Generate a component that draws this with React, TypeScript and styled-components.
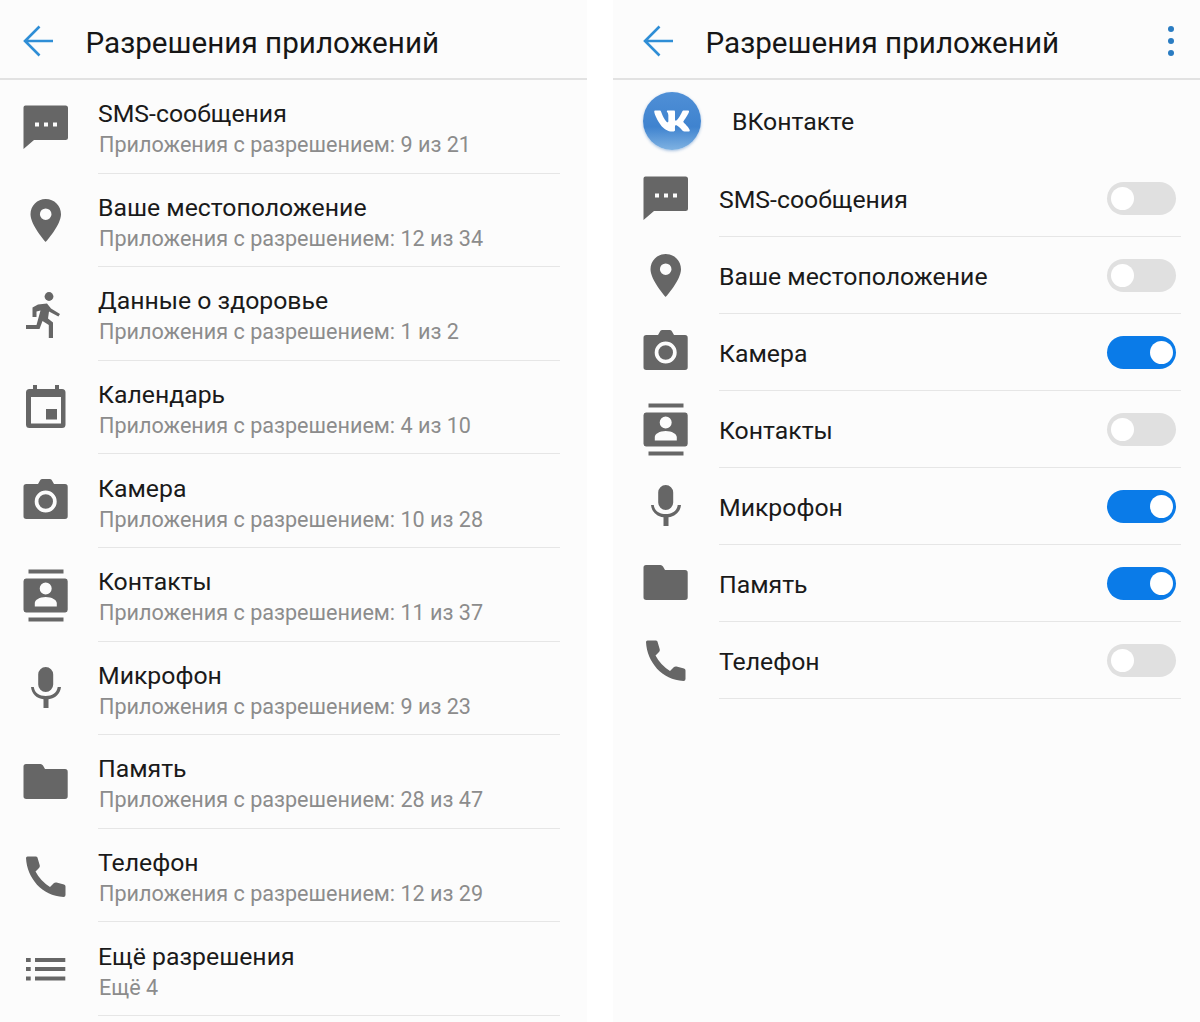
import React from 'react';
import styled, {createGlobalStyle} from 'styled-components';
import {FaVk} from 'react-icons/fa';

const Global = createGlobalStyle`
  html, body {
    margin: 0;
    background: #fff;
  }
  body {
    font-family: Roboto, "Liberation Sans", sans-serif;
  }
`;

const Page = styled.div`
  display: flex;
  justify-content: space-between;
  width: 1200px;
  height: 1022px;
  overflow: hidden;
`;
const Panel = styled.section`
  width: 587px;
  height: 1022px;
  background: #fcfcfc;
`;
const Header = styled.header<{$inset: number}>`
  display: flex;
  align-items: center;
  gap: 29.5px;
  height: 74px;
  padding-top: 4px;
  padding-left: ${p => p.$inset}px;
  padding-right: 25px;
  border-bottom: 2.5px solid #e2e2e2;
`;
const Title = styled.h1`
  flex: 1;
  margin: 0;
  padding-top: 2px;
  font-size: 29.65px;
  font-weight: 400;
  color: #161616;
`;
const Row = styled.div<{$height: number; $inset: number; $gap: number; $end: number}>`
  display: flex;
  align-items: center;
  gap: ${p => p.$gap}px;
  height: ${p => p.$height}px;
  padding-left: ${p => p.$inset}px;
  padding-right: ${p => p.$end}px;
`;
const Body = styled.div`
  flex: 1;
  align-self: stretch;
  display: flex;
  align-items: center;
  justify-content: space-between;
  box-sizing: border-box;
  padding-top: 4px;
  padding-right: 5px;
  border-bottom: 1px solid #e6e6e6;
`;
const Stack = styled.div`
  display: flex;
  flex-direction: column;
  gap: 2px;
  padding-top: 2px;
`;
const Name = styled.div`
  font-size: 24.8px;
  line-height: 30px;
  color: #1a1a1a;
`;
const Sub = styled.div`
  margin-left: 1px;
  font-size: 21.6px;
  line-height: 28px;
  color: #8c8c8c;
`;
const AppRow = styled.div`
  display: flex;
  align-items: center;
  gap: 31px;
  height: 79.5px;
  padding: 4px 0 0 30px;
  box-sizing: border-box;
`;
const Avatar = styled.div`
  display: flex;
  align-items: center;
  justify-content: center;
  width: 58px;
  height: 58px;
  margin-top: -2px;
  border-radius: 50%;
  color: #fff;
  background: linear-gradient(180deg, #4f8fd6 0%, #3f83cf 60%, #7fb2e2 100%);
  box-shadow: 0 1px 3px rgba(60, 120, 190, 0.45);
`;
const Toggle = styled.div<{$on: boolean}>`
  display: flex;
  align-items: center;
  justify-content: ${p => (p.$on ? 'flex-end' : 'flex-start')};
  width: 69px;
  height: 33px;
  margin-top: -2px;
  padding: 0 3px 0 4px;
  box-sizing: border-box;
  border-radius: 17px;
  background: ${p => (p.$on ? '#0a7be8' : '#e0e0e0')};
`;
const Knob = styled.span`
  width: 23px;
  height: 23px;
  border-radius: 50%;
  background: #fff;
`;
const Glyph = styled.svg`
  flex: none;
  width: 48px;
  height: 48px;
  overflow: visible;
  fill: #666;
`;
const BackIcon = styled.svg`
  flex: none;
  width: 34px;
  height: 34px;
  overflow: visible;
  fill: none;
  stroke: #2f8ed6;
  stroke-width: 2.6;
`;
const MoreIcon = styled.svg`
  flex: none;
  width: 8px;
  height: 32px;
  fill: #2a7cc2;
`;

type IconName = 'sms' | 'pin' | 'run' | 'calendar' | 'camera' | 'contacts' | 'mic' | 'folder' | 'phone' | 'list';

const shapes: Record<IconName, React.ReactNode> = {
  sms: <path fillRule="evenodd" d="M3.5 2.5H43.5A2.5 2.5 0 0 1 46 5V34.5A2.5 2.5 0 0 1 43.5 37H12L1.5 46V4.5A2 2 0 0 1 3.5 2.5ZM13 19.5V23.5H17V19.5ZM22 19.5V23.5H26V19.5ZM31 19.5V23.5H35V19.5Z"/>,
  pin: <path fillRule="evenodd" d="M23.7 3C32.3 3 39 9.8 39 18.2 39 29 23.7 46 23.7 46S8.5 29 8.5 18.2C8.5 9.8 15.2 3 23.7 3ZM23.7 12.4A5.8 5.8 0 1 0 23.7 24 5.8 5.8 0 1 0 23.7 12.4Z"/>,
  run: <g>
    <circle cx="27" cy="6.5" r="4.4"/>
    <path d="M16 14.5 25 13.5 29 18.5 38 24 36.4 26.6 27 21.5 26 28.5 31 32.5V48H26.8V35L20.5 31 17.5 39H4V35H14.5L18.5 20.5 14.5 21.5V27H10.5V17.5Z"/>
  </g>,
  calendar: <path fillRule="evenodd" d="M11 1H15V5H33V1H37V5H40A3.5 3.5 0 0 1 43.5 8.5V40.5A3.5 3.5 0 0 1 40 44H7.500A3.5 3.5 0 0 1 4 40.500V8.500A3.5 3.5 0 0 1 7.5 5H11ZM9 13V39.500H39V13ZM24 25H35V35.500H24Z"/>,
  camera: <path fillRule="evenodd" d="M16 7 18 3.500Q18.500 2 20 2H28Q29.500 2 30 3.500L32 7H43A2.700 2.700 0 0 1 45.700 9.700V39.300A2.700 2.700 0 0 1 43 42H4.200A2.700 2.700 0 0 1 1.500 39.300V9.700A2.700 2.700 0 0 1 4.200 7ZM23.700 13.500A11 11 0 1 0 23.700 35.500 11 11 0 1 0 23.700 13.500ZM23.700 17.200A7.300 7.300 0 1 1 23.700 31.800 7.300 7.300 0 1 1 23.700 17.200Z"/>,
  contacts: <path fillRule="evenodd" d="M6.500 -1.500H41.500V2.500H6.500ZM6.500 46.500H41.500V50.500H6.500ZM4 7.500H43.200A2.700 2.700 0 0 1 45.700 10.200V38.800A2.700 2.700 0 0 1 43.200 41.500H4A2.700 2.700 0 0 1 1.500 38.800V10.200A2.700 2.700 0 0 1 4 7.500ZM23.700 11.500A6 6 0 1 0 23.700 23.500 6 6 0 1 0 23.700 11.500ZM23.700 26C17.500 26 12.800 29 12.800 32V35.500H34.800V32C34.800 29 29.900 26 23.700 26Z"/>,
  mic: <path d="M23.700 3A7.500 7.500 0 0 1 31.200 10.500V20.500A7.500 7.500 0 0 1 16.200 20.500V10.500A7.500 7.500 0 0 1 23.700 3ZM9 23H11.800C12.500 29 17.500 32 23.700 32S35 29 35.700 23H39C38.300 30 33 34.500 26.500 35.300V44H21.500V35.300C14.800 34.500 9.700 30 9 23Z"/>,
  folder: <path d="M4 6H18.500Q20 6 21 7.500L23 11H43A2.700 2.700 0 0 1 45.700 13.700V38.300A2.700 2.700 0 0 1 43 41H4.200A2.700 2.700 0 0 1 1.500 38.300V8.500A2.500 2.500 0 0 1 4 6Z"/>,
  phone: <path d="M4 6Q4 4.500 5.500 4.500H14Q15.500 4.500 15.600 6L17.800 13.500Q18 15 17 16L13.500 19.500Q18.500 29 28 35L32 31Q33 30.200 34.500 30.500L42 32.500Q43.500 33 43.500 34.500V43Q43.500 45 41.500 45C20 44 5 26 4 6Z"/>,
  list: <path d="M4 13H8.700V17H4ZM13 13H43.300V17H13ZM4 22H8.700V26H4ZM13 22H43.300V26H13ZM4 31.500H8.700V35.500H4ZM13 31.500H43.300V35.500H13Z"/>,
};

const Icon = ({name}: {name: IconName}) => <Glyph viewBox="0 0 48 48">{shapes[name]}</Glyph>;

const Back = () => (
  <BackIcon viewBox="0 0 34 34">
    <path d="M31 17H3M17.500 2.500 3 17 17.500 31.500"/>
  </BackIcon>
);

const groups: {icon: IconName; name: string; sub: string}[] = [
  {icon: 'sms', name: 'SMS-сообщения', sub: 'Приложения с разрешением: 9 из 21'},
  {icon: 'pin', name: 'Ваше местоположение', sub: 'Приложения с разрешением: 12 из 34'},
  {icon: 'run', name: 'Данные о здоровье', sub: 'Приложения с разрешением: 1 из 2'},
  {icon: 'calendar', name: 'Календарь', sub: 'Приложения с разрешением: 4 из 10'},
  {icon: 'camera', name: 'Камера', sub: 'Приложения с разрешением: 10 из 28'},
  {icon: 'contacts', name: 'Контакты', sub: 'Приложения с разрешением: 11 из 37'},
  {icon: 'mic', name: 'Микрофон', sub: 'Приложения с разрешением: 9 из 23'},
  {icon: 'folder', name: 'Память', sub: 'Приложения с разрешением: 28 из 47'},
  {icon: 'phone', name: 'Телефон', sub: 'Приложения с разрешением: 12 из 29'},
  {icon: 'list', name: 'Ещё разрешения', sub: 'Ещё 4'},
];

const perms: {icon: IconName; name: string; on: boolean}[] = [
  {icon: 'sms', name: 'SMS-сообщения', on: false},
  {icon: 'pin', name: 'Ваше местоположение', on: false},
  {icon: 'camera', name: 'Камера', on: true},
  {icon: 'contacts', name: 'Контакты', on: false},
  {icon: 'mic', name: 'Микрофон', on: true},
  {icon: 'folder', name: 'Память', on: true},
  {icon: 'phone', name: 'Телефон', on: false},
];

function App() {
  return (
    <Page>
      <Global/>
      <Panel>
        <Header $inset={22}>
          <Back/>
          <Title>Разрешения приложений</Title>
        </Header>
        {groups.map(g => (
          <Row key={g.name} $height={93.6} $inset={22} $gap={28} $end={27}>
            <Icon name={g.icon}/>
            <Body>
              <Stack>
                <Name>{g.name}</Name>
                <Sub>{g.sub}</Sub>
              </Stack>
            </Body>
          </Row>
        ))}
      </Panel>
      <Panel>
        <Header $inset={29}>
          <Back/>
          <Title>Разрешения приложений</Title>
          <MoreIcon viewBox="0 0 8 32">
            <circle cx="4" cy="4" r="3"/>
            <circle cx="4" cy="16" r="3"/>
            <circle cx="4" cy="28" r="3"/>
          </MoreIcon>
        </Header>
        <AppRow>
          <Avatar><FaVk size={38}/></Avatar>
          <Name>ВКонтакте</Name>
        </AppRow>
        {perms.map(p => (
          <Row key={p.name} $height={77} $inset={29} $gap={29} $end={19}>
            <Icon name={p.icon}/>
            <Body>
              <Name>{p.name}</Name>
              <Toggle $on={p.on}><Knob/></Toggle>
            </Body>
          </Row>
        ))}
      </Panel>
    </Page>
  );
}

export default App;
